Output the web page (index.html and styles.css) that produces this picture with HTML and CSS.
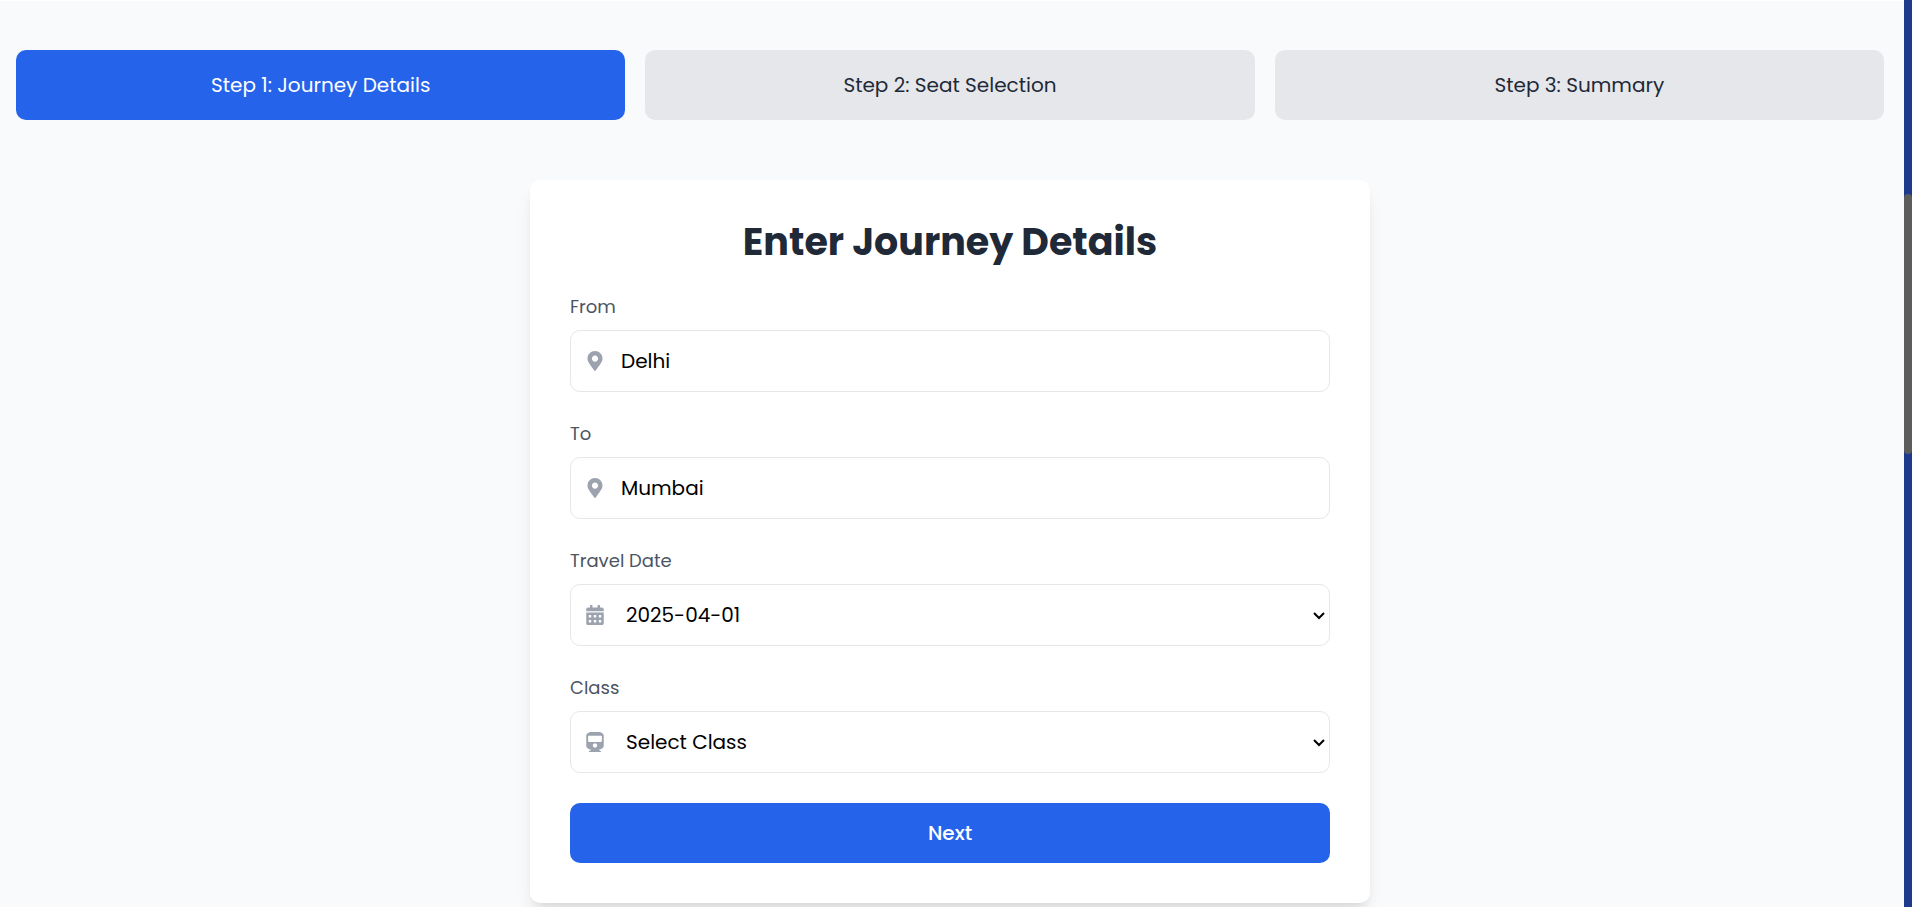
FILE: index.html
```html
<!DOCTYPE html>
<html lang="en">
<head>
<meta charset="utf-8">
<meta name="viewport" content="width=device-width, initial-scale=1">
<title>Enter Journey Details</title>
<link rel="stylesheet" href="styles.css">
</head>
<body>
<div class="page">
  <main class="content">
    <ol class="steps">
      <li class="step step-active" aria-current="step">Step 1: Journey Details</li>
      <li class="step">Step 2: Seat Selection</li>
      <li class="step">Step 3: Summary</li>
    </ol>
    <form class="card">
      <h1 class="title">Enter Journey Details</h1>
      <div class="field">
        <label class="label" for="from">From</label>
        <div class="control">
          <svg class="icon" viewBox="0 0 384 512" aria-hidden="true"><path d="M172.268 501.670C26.970 291.031 0 269.413 0 192 0 85.961 85.961 0 192 0s192 85.961 192 192c0 77.413-26.970 99.031-172.268 309.670-9.535 13.774-29.930 13.773-39.464 0zM192 272c44.183 0 80-35.817 80-80s-35.817-80-80-80-80 35.817-80 80 35.817 80 80 80z"/></svg>
          <input class="input" id="from" type="text" value="Delhi">
        </div>
      </div>
      <div class="field">
        <label class="label" for="to">To</label>
        <div class="control">
          <svg class="icon" viewBox="0 0 384 512" aria-hidden="true"><path d="M172.268 501.670C26.970 291.031 0 269.413 0 192 0 85.961 85.961 0 192 0s192 85.961 192 192c0 77.413-26.970 99.031-172.268 309.670-9.535 13.774-29.930 13.773-39.464 0zM192 272c44.183 0 80-35.817 80-80s-35.817-80-80-80-80 35.817-80 80 35.817 80 80 80z"/></svg>
          <input class="input" id="to" type="text" value="Mumbai">
        </div>
      </div>
      <div class="field">
        <label class="label" for="date">Travel Date</label>
        <div class="control">
          <svg class="icon" viewBox="0 0 448 512" aria-hidden="true"><path d="M0 464c0 26.500 21.500 48 48 48h352c26.500 0 48-21.500 48-48V192H0v272zm320-196c0-6.600 5.400-12 12-12h40c6.600 0 12 5.400 12 12v40c0 6.600-5.400 12-12 12h-40c-6.600 0-12-5.400-12-12v-40zm0 128c0-6.600 5.400-12 12-12h40c6.600 0 12 5.400 12 12v40c0 6.600-5.400 12-12 12h-40c-6.600 0-12-5.400-12-12v-40zM192 268c0-6.600 5.400-12 12-12h40c6.600 0 12 5.400 12 12v40c0 6.600-5.400 12-12 12h-40c-6.600 0-12-5.400-12-12v-40zm0 128c0-6.600 5.400-12 12-12h40c6.600 0 12 5.400 12 12v40c0 6.600-5.400 12-12 12h-40c-6.600 0-12-5.400-12-12v-40zM64 268c0-6.600 5.400-12 12-12h40c6.600 0 12 5.400 12 12v40c0 6.600-5.400 12-12 12H76c-6.600 0-12-5.400-12-12v-40zm0 128c0-6.600 5.400-12 12-12h40c6.600 0 12 5.400 12 12v40c0 6.600-5.400 12-12 12H76c-6.600 0-12-5.400-12-12v-40zM400 64h-48V16c0-8.800-7.200-16-16-16h-32c-8.800 0-16 7.200-16 16v48H160V16c0-8.800-7.200-16-16-16h-32c-8.800 0-16 7.200-16 16v48H48C21.500 64 0 85.500 0 112v48h448v-48c0-26.500-21.500-48-48-48z"/></svg>
          <select class="input select" id="date"><option>2025-04-01</option></select>
          <svg class="chevron" viewBox="0 0 12 8" aria-hidden="true"><path d="M1 2 6 7 11 2"/></svg>
        </div>
      </div>
      <div class="field">
        <label class="label" for="class">Class</label>
        <div class="control">
          <svg class="icon" viewBox="0 0 448 512" aria-hidden="true"><path d="M448 96v256c0 51.800-61.600 96-130 96l63 49.700c5.900 4.700 2.600 14.300-5 14.300H72c-7.600 0-10.900-9.600-5-14.300L130 448C61.800 448 0 403.900 0 352V96C0 43 64 0 128 0h192c65 0 128 43 128 96zm-48 136V120c0-13.300-10.700-24-24-24H72c-13.300 0-24 10.700-24 24v112c0 13.300 10.700 24 24 24h304c13.300 0 24-10.700 24-24zm-176 56c-30.900 0-56 25.100-56 56s25.100 56 56 56 56-25.100 56-56-25.100-56-56-56z"/></svg>
          <select class="input select" id="class"><option>Select Class</option></select>
          <svg class="chevron" viewBox="0 0 12 8" aria-hidden="true"><path d="M1 2 6 7 11 2"/></svg>
        </div>
      </div>
      <button class="next" type="button">Next</button>
    </form>
  </main>
  <div class="rail" aria-hidden="true"><div class="thumb"></div></div>
</div>
</body>
</html>
```
FILE: styles.css
```css
* { box-sizing: border-box; }

body {
  margin: 0;
  background: #f9fafb;
  color: #1f2937;
  font-family: Poppins, "Open Sans", sans-serif;
  font-size: 20px;
  line-height: 30px;
}

.page {
  display: grid;
  grid-template-columns: minmax(0, 1fr) 8px;
  min-height: 100vh;
}

.content {
  padding: 49px 20px 4px 16px;
  border-top: 1px solid #fff;
  background: #f9fafb;
}

.steps {
  display: grid;
  grid-template-columns: repeat(3, minmax(0, 1fr));
  gap: 20px;
  margin: 0 0 60px;
  padding: 0;
  list-style: none;
}

.step {
  padding: 20px;
  border-radius: 10px;
  background: #e5e7eb;
  text-align: center;
}

.step-active {
  background: #2563eb;
  color: #fff;
}

.card {
  display: flex;
  flex-direction: column;
  gap: 30px;
  max-width: 840px;
  margin: 0 auto;
  padding: 40px;
  border-radius: 10px;
  background: #fff;
  box-shadow: 0 12px 18px -4px rgb(0 0 0 / 10%), 0 5px 8px -5px rgb(0 0 0 / 10%);
}

.title {
  margin: 0;
  padding-bottom: 1px;
  font-size: 38px;
  font-weight: 700;
  line-height: 44px;
  text-align: center;
}

.label {
  display: block;
  margin-bottom: 12px;
  color: #4b5563;
  font-size: 18px;
  line-height: 23px;
}

.control { position: relative; }

.icon {
  position: absolute;
  top: 0;
  bottom: 0;
  left: 15px;
  width: 20px;
  height: 20px;
  margin: auto 0;
  fill: #9ca3af;
}

.input {
  display: block;
  width: 100%;
  height: 62px;
  padding: 0 20px 0 50px;
  border: 1px solid #e5e7eb;
  border-radius: 10px;
  background: #fff;
  color: #000;
  font: inherit;
}

.select {
  padding-left: 55px;
  appearance: none;
}

.chevron {
  position: absolute;
  top: 0;
  bottom: 0;
  right: 5px;
  width: 12px;
  height: 8px;
  margin: auto 0;
  overflow: visible;
  fill: none;
  stroke: #000;
  stroke-width: 2;
  pointer-events: none;
}

.next {
  padding: 15px;
  border: 0;
  border-radius: 10px;
  background: #2563eb;
  color: #fff;
  font: inherit;
  font-weight: 500;
}

.rail {
  display: grid;
  grid-template-rows: 194fr 260fr 453fr;
  background: #1e3a8a;
}

.thumb {
  grid-row: 2;
  border-radius: 4px;
  background: #5c5c5c;
}
```
